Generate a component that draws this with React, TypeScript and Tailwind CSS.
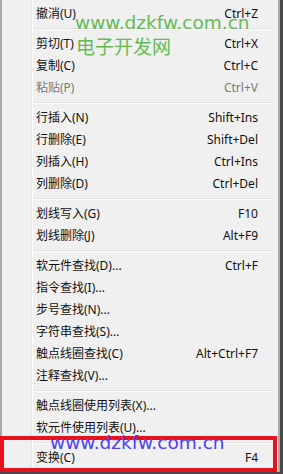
const items: (
  | { label: string; shortcut?: string; disabled?: boolean }
  | "sep"
)[] = [
  { label: "撤消(U)", shortcut: "Ctrl+Z" },
  "sep",
  { label: "剪切(T)", shortcut: "Ctrl+X" },
  { label: "复制(C)", shortcut: "Ctrl+C" },
  { label: "粘贴(P)", shortcut: "Ctrl+V", disabled: true },
  "sep",
  { label: "行插入(N)", shortcut: "Shift+Ins" },
  { label: "行删除(E)", shortcut: "Shift+Del" },
  { label: "列插入(H)", shortcut: "Ctrl+Ins" },
  { label: "列删除(D)", shortcut: "Ctrl+Del" },
  "sep",
  { label: "划线写入(G)", shortcut: "F10" },
  { label: "划线删除(J)", shortcut: "Alt+F9" },
  "sep",
  { label: "软元件查找(D)...", shortcut: "Ctrl+F" },
  { label: "指令查找(I)..." },
  { label: "步号查找(N)..." },
  { label: "字符串查找(S)..." },
  { label: "触点线圈查找(C)", shortcut: "Alt+Ctrl+F7" },
  { label: "注释查找(V)..." },
  "sep",
  { label: "触点线圈使用列表(X)..." },
  { label: "软元件使用列表(U)..." },
  "sep",
  { label: "变换(C)", shortcut: "F4" },
];

export default function App() {
  return (
    <div className="relative w-[283px] h-[474px] bg-[#4a4a4a] overflow-hidden">
      {/* menu */}
      <div className="flex w-[280px] h-[472px] bg-[#f0f0f0] border-l-2 border-r-2 border-b border-[#a7a7a7] text-[12px] text-[#111] font-['Noto_Sans','Noto_Sans_CJK_SC',sans-serif]">
        <div className="w-[30px] shrink-0 border-r border-[#e2e3e3]" />
        <div className="w-px shrink-0 bg-white" />
        <div className="flex-1 pt-[3px]">
          {items.map((it, i) =>
            it === "sep" ? (
              <div key={i} className="h-[8px] pt-[3px] mr-[5px]">
                <div className="border-t border-[#e0e0e0] border-b border-b-white" />
              </div>
            ) : (
              <div
                key={i}
                className={`flex items-center justify-between h-[22px] pl-[3px] pr-[20px] ${
                  it.disabled ? "text-[#7a7a7a]" : ""
                }`}
              >
                <span>{it.label}</span>
                {it.shortcut && <span>{it.shortcut}</span>}
              </div>
            )
          )}
        </div>
      </div>

      {/* watermarks */}
      <div className="absolute left-[75px] top-[12px] text-[18.5px] leading-[22px] text-[#64bb52] font-['DejaVu_Sans',sans-serif]">
        www.dzkfw.com.cn
      </div>
      <div className="absolute left-[76px] top-[34px] text-[19px] leading-[24px] text-[#64bb52] font-['Noto_Sans_CJK_SC',sans-serif]">
        电子开发网
      </div>

      {/* highlight box */}
      <div className="absolute left-0 top-[436px] w-[277px] h-[36px] border-4 border-[#e8121e]" />
      <div className="absolute left-[50px] top-[432px] text-[18.5px] leading-[22px] text-[#4b42f2] font-['DejaVu_Sans',sans-serif]">
        www.dzkfw.com.cn
      </div>
    </div>
  );
}
